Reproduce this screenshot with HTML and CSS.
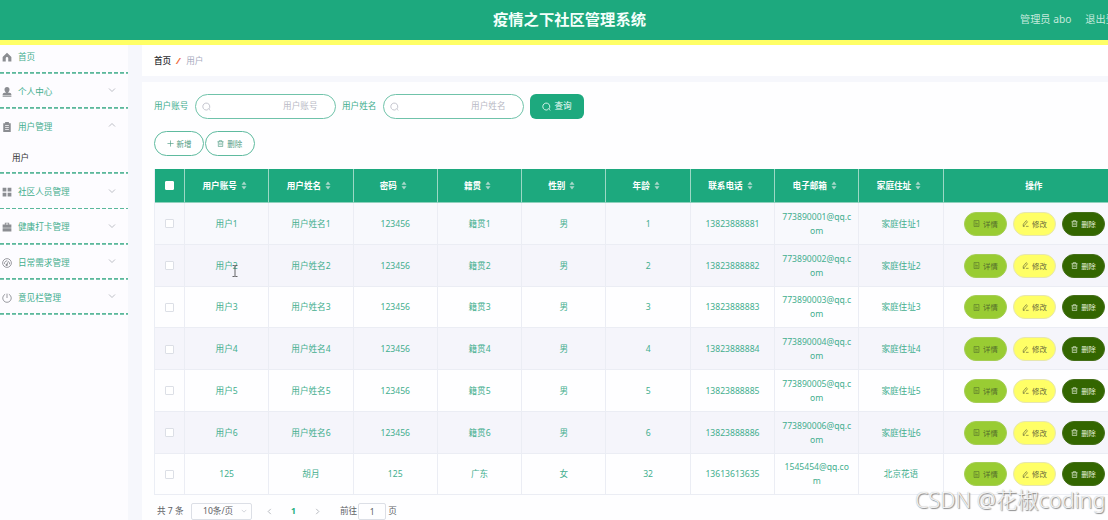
FILE: index.html
```html
<!DOCTYPE html>
<html lang="zh-CN">
<head>
<meta charset="utf-8">
<title>疫情之下社区管理系统</title>
<link rel="stylesheet" href="styles.css">
</head>
<body>
<svg class="sprite" aria-hidden="true">
  <symbol id="home" viewBox="0 0 16 16"><path fill="currentColor" d="M8 1 1 8v7h5v-5a2 2 0 0 1 4 0v5h5V8z"/></symbol>
  <symbol id="person" viewBox="0 0 16 16"><path fill="currentColor" d="M8 0a4 4 0 0 0-4 4c0 2 1 4 2.500 5H4a3 3 0 0 0-3 3v1h14v-1a3 3 0 0 0-3-3H9.500C11 8 12 6 12 4a4 4 0 0 0-4-4zM1 14h14v1.500H1z"/></symbol>
  <symbol id="board" viewBox="0 0 16 16"><path fill="currentColor" fill-rule="evenodd" d="M5 0h6v2h3v14H2V2h3zM5 5v1.300h6V5zm0 3v1.300h6V8zm0 3v1.300h6V11z"/></symbol>
  <symbol id="tiles" viewBox="0 0 16 16"><path fill="currentColor" d="M1 1h6v6H1zM9 1h6v6H9zM1 9h6v6H1zM9 9h6v6H9z"/></symbol>
  <symbol id="case" viewBox="0 0 16 16"><path fill="currentColor" fill-rule="evenodd" d="M4.500 1h7v3H15v5H1V4h3.500zM6 2.500V4h4V2.500zM1 10h14v5H1z"/></symbol>
  <symbol id="gauge" viewBox="0 0 16 16"><g fill="none" stroke="currentColor" stroke-width="1.400"><circle cx="8" cy="8" r="7"/><path d="M4 9.500a4.300 4.300 0 0 1 4.500-5M12 7v3"/><path d="m8 10 2.500-5"/></g><circle cx="7.500" cy="11" r="1.800" fill="currentColor"/></symbol>
  <symbol id="power" viewBox="0 0 16 16"><path fill="none" stroke="currentColor" stroke-width="1.400" d="M8 1v7M5 2a6.800 6.800 0 1 0 6 0"/></symbol>
  <symbol id="down" viewBox="0 0 16 16"><path fill="none" stroke="currentColor" stroke-width="1.800" d="m2 5 6 6 6-6"/></symbol>
  <symbol id="search" viewBox="0 0 16 16"><path fill="none" stroke="currentColor" stroke-width="1.500" d="M12 12.500a6.200 6.200 0 1 0-1.500 1.100M11 11.500l3.500 3.500"/></symbol>
  <symbol id="plus" viewBox="0 0 16 16"><path fill="none" stroke="currentColor" stroke-width="1.500" d="M8 1v14M1 8h14"/></symbol>
  <symbol id="trash" viewBox="0 0 16 16"><path fill="none" stroke="currentColor" stroke-width="1.500" d="M1 4h14M5 4V1.500h6V4M3 4v11h10V4M6.500 7v5M9.500 7v5"/></symbol>
  <symbol id="doc" viewBox="0 0 16 16"><path fill="none" stroke="currentColor" stroke-width="1.400" d="M2.500 1h11v14h-11zM5 4.500h3M5 8h6M5 11.500h6"/></symbol>
  <symbol id="edit" viewBox="0 0 16 16"><path fill="none" stroke="currentColor" stroke-width="1.500" d="M3 9.500 9.500 1.500l3 2.500L6 12l-3.500 1zM2 15h4M9 14.500h6"/></symbol>
  <symbol id="sort" viewBox="0 0 10 16"><path fill="currentColor" d="M5 1 9.500 6.500h-9zM5 15 .5 9.500h9z"/></symbol>
</svg>

<header class="topbar">
  <h1 class="title">疫情之下社区管理系统</h1>
  <div class="account"><span>管理员 abo</span><span>退出登录</span></div>
</header>

<div class="layout">
  <nav class="sidebar">
    <div class="item first"><svg class="mi"><use href="#home"/></svg><span>首页</span></div>
    <div class="item"><svg class="mi"><use href="#person"/></svg><span>个人中心</span><svg class="arrow"><use href="#down"/></svg></div>
    <div class="item open"><svg class="mi"><use href="#board"/></svg><span>用户管理</span><svg class="arrow up"><use href="#down"/></svg></div>
    <div class="subitem">用户</div>
    <div class="item"><svg class="mi"><use href="#tiles"/></svg><span>社区人员管理</span><svg class="arrow"><use href="#down"/></svg></div>
    <div class="item"><svg class="mi"><use href="#case"/></svg><span>健康打卡管理</span><svg class="arrow"><use href="#down"/></svg></div>
    <div class="item"><svg class="mi"><use href="#gauge"/></svg><span>日常需求管理</span><svg class="arrow"><use href="#down"/></svg></div>
    <div class="item"><svg class="mi"><use href="#power"/></svg><span>意见栏管理</span><svg class="arrow"><use href="#down"/></svg></div>
  </nav>

  <main class="content">
    <div class="crumbs"><b>首页</b><i>/</i><span>用户</span></div>
    <section class="panel">
      <div class="filters">
        <span class="label">用户账号</span>
        <div class="field"><svg class="ic9"><use href="#search"/></svg><span>用户账号</span></div>
        <span class="label">用户姓名</span>
        <div class="field"><svg class="ic9"><use href="#search"/></svg><span>用户姓名</span></div>
        <button class="query"><svg class="ic9"><use href="#search"/></svg>查询</button>
      </div>
      <div class="actions">
        <button class="ghost"><svg class="ic"><use href="#plus"/></svg>新增</button>
        <button class="ghost"><svg class="ic"><use href="#trash"/></svg>删除</button>
      </div>

      <div class="table">
        <div class="row head">
          <div><span class="box"></span></div>
          <div>用户账号<svg class="sort"><use href="#sort"/></svg></div>
          <div>用户姓名<svg class="sort"><use href="#sort"/></svg></div>
          <div>密码<svg class="sort"><use href="#sort"/></svg></div>
          <div>籍贯<svg class="sort"><use href="#sort"/></svg></div>
          <div>性别<svg class="sort"><use href="#sort"/></svg></div>
          <div>年龄<svg class="sort"><use href="#sort"/></svg></div>
          <div>联系电话<svg class="sort"><use href="#sort"/></svg></div>
          <div>电子邮箱<svg class="sort"><use href="#sort"/></svg></div>
          <div>家庭住址<svg class="sort"><use href="#sort"/></svg></div>
          <div class="last">操作</div>
        </div>
        <div class="row tint">
          <div><span class="box"></span></div><div>用户1</div><div>用户姓名1</div><div>123456</div><div>籍贯1</div><div>男</div><div>1</div><div>13823888881</div><div class="mail">773890001@qq.com</div><div>家庭住址1</div>
          <div class="ops"><button class="op view"><svg class="ic"><use href="#doc"/></svg>详情</button><button class="op edit"><svg class="ic"><use href="#edit"/></svg>修改</button><button class="op del"><svg class="ic"><use href="#trash"/></svg>删除</button></div>
        </div>
        <div class="row alt">
          <div><span class="box"></span></div><div class="pointed">用户2<svg class="cursor" viewBox="0 0 6 12"><path d="M.5.5h2l.5.500.500-.5h2M3 1v10M.5 11.500h2l.5-.5.5.500h2"/></svg></div><div>用户姓名2</div><div>123456</div><div>籍贯2</div><div>男</div><div>2</div><div>13823888882</div><div class="mail">773890002@qq.com</div><div>家庭住址2</div>
          <div class="ops"><button class="op view"><svg class="ic"><use href="#doc"/></svg>详情</button><button class="op edit"><svg class="ic"><use href="#edit"/></svg>修改</button><button class="op del"><svg class="ic"><use href="#trash"/></svg>删除</button></div>
        </div>
        <div class="row">
          <div><span class="box"></span></div><div>用户3</div><div>用户姓名3</div><div>123456</div><div>籍贯3</div><div>男</div><div>3</div><div>13823888883</div><div class="mail">773890003@qq.com</div><div>家庭住址3</div>
          <div class="ops"><button class="op view"><svg class="ic"><use href="#doc"/></svg>详情</button><button class="op edit"><svg class="ic"><use href="#edit"/></svg>修改</button><button class="op del"><svg class="ic"><use href="#trash"/></svg>删除</button></div>
        </div>
        <div class="row alt">
          <div><span class="box"></span></div><div>用户4</div><div>用户姓名4</div><div>123456</div><div>籍贯4</div><div>男</div><div>4</div><div>13823888884</div><div class="mail">773890004@qq.com</div><div>家庭住址4</div>
          <div class="ops"><button class="op view"><svg class="ic"><use href="#doc"/></svg>详情</button><button class="op edit"><svg class="ic"><use href="#edit"/></svg>修改</button><button class="op del"><svg class="ic"><use href="#trash"/></svg>删除</button></div>
        </div>
        <div class="row">
          <div><span class="box"></span></div><div>用户5</div><div>用户姓名5</div><div>123456</div><div>籍贯5</div><div>男</div><div>5</div><div>13823888885</div><div class="mail">773890005@qq.com</div><div>家庭住址5</div>
          <div class="ops"><button class="op view"><svg class="ic"><use href="#doc"/></svg>详情</button><button class="op edit"><svg class="ic"><use href="#edit"/></svg>修改</button><button class="op del"><svg class="ic"><use href="#trash"/></svg>删除</button></div>
        </div>
        <div class="row alt">
          <div><span class="box"></span></div><div>用户6</div><div>用户姓名6</div><div>123456</div><div>籍贯6</div><div>男</div><div>6</div><div>13823888886</div><div class="mail">773890006@qq.com</div><div>家庭住址6</div>
          <div class="ops"><button class="op view"><svg class="ic"><use href="#doc"/></svg>详情</button><button class="op edit"><svg class="ic"><use href="#edit"/></svg>修改</button><button class="op del"><svg class="ic"><use href="#trash"/></svg>删除</button></div>
        </div>
        <div class="row">
          <div><span class="box"></span></div><div>125</div><div>胡月</div><div>125</div><div>广东</div><div>女</div><div>32</div><div>13613613635</div><div class="mail">1545454@qq.com</div><div>北京花语</div>
          <div class="ops"><button class="op view"><svg class="ic"><use href="#doc"/></svg>详情</button><button class="op edit"><svg class="ic"><use href="#edit"/></svg>修改</button><button class="op del"><svg class="ic"><use href="#trash"/></svg>删除</button></div>
        </div>
      </div>

      <div class="pager">
        <span class="total">共 7 条</span>
        <div class="size"><span>10条/页</span><svg class="ic"><use href="#down"/></svg></div>
        <svg class="ic prev"><use href="#down"/></svg>
        <b class="page">1</b>
        <svg class="ic next"><use href="#down"/></svg>
        <span>前往</span><div class="jump">1</div><span>页</span>
      </div>
    </section>
  </main>
</div>
<div class="watermark">CSDN @花椒coding</div>
</body>
</html>
```

FILE: styles.css
```css
* { box-sizing: border-box; }
body {
  margin: 0;
  width: 1108px;
  height: 520px;
  overflow: hidden;
  position: relative;
  background: #f6f7fc;
  color: #43ae8e;
  font: 8.6px/14px "Noto Sans", "Noto Sans CJK SC", sans-serif;
}
button { font: inherit; padding: 0; margin: 0; }
.sprite { display: none; }
svg { flex: none; }
.ic { width: 7px; height: 7px; }
.ic9 { width: 9px; height: 9px; }

.topbar {
  height: 45px;
  background: #1da97e;
  border-bottom: 5px solid #ffff66;
  display: grid;
  grid-template-columns: 493px 1fr auto;
  align-items: center;
  padding-bottom: 3px;
}
.title {
  grid-column: 2;
  margin: 0;
  font-size: 15.300px;
  line-height: 20px;
  font-weight: 700;
  color: #f4fffb;
}
.account {
  display: flex;
  gap: 14px;
  width: 88px;
  white-space: nowrap;
  font-size: 10.200px;
  color: #c5e9dd;
}
.account span { flex: none; }

.layout { display: flex; height: 475px; }
.sidebar { width: 128px; flex: none; background: #fdfcff; margin-right: 14px; }
.item, .subitem {
  background: repeating-linear-gradient(90deg, #5bb89b 0 4px, transparent 4px 6px) left bottom / 100% 1.800px no-repeat;
}
.item {
  height: 35.150px;
  display: flex;
  align-items: center;
  padding: 1px 12px 0 2px;
}
.item.first { height: 28.500px; padding-bottom: 5px; }
.item.open { background: none; }
.item span { margin-left: 6px; flex: 1; }
.mi { width: 10px; height: 10px; color: #8b8d92; }
.arrow { width: 8px; height: 8px; color: #b4b7bd; margin-top: -3px; }
.up { transform: rotate(180deg); }
.subitem {
  height: 30.500px;
  padding: 7px 0 0 12px;
  color: #333;
}

.content { flex: 1; min-width: 0; display: flex; flex-direction: column; gap: 6px; }
.crumbs {
  height: 31px;
  flex: none;
  background: #fff;
  display: flex;
  align-items: center;
  padding-left: 12px;
}
.crumbs b { color: #303133; font-weight: 500; }
.crumbs i { color: #ef6a3c; font-weight: 700; font-size: 9.500px; margin: 0 6px 0 5px; }
.crumbs span { color: #a9acc0; }
.panel { flex: 1; background: #fefeff; padding: 12px 0 0 12px; overflow: hidden; }

.filters { display: flex; align-items: center; height: 24.500px; }
.label { width: 34.500px; margin-right: 6.500px; white-space: nowrap; }
.field {
  width: 140.500px;
  height: 24.500px;
  border: 1px solid #70c3aa;
  border-radius: 13px;
  display: flex;
  align-items: center;
  justify-content: space-between;
  padding: 0 17px 0 6px;
  margin-right: 6.500px;
  background: #fff;
  color: #b9bac5;
}
.query {
  width: 54px;
  height: 24.500px;
  border: 0;
  border-radius: 6px;
  background: #1da97e;
  color: #f3fffb;
  display: flex;
  align-items: center;
  justify-content: center;
  gap: 3px;
}
.actions { display: flex; gap: .4px; margin-top: 12.800px; }
.ghost {
  width: 50.200px;
  height: 25px;
  border: 1px solid #5fbb9f;
  border-radius: 13px;
  background: #fff;
  color: #4f9c84;
  font-size: 7.500px;
  display: flex;
  align-items: center;
  justify-content: center;
  gap: 3px;
}

.table { width: 971px; margin-top: 13.200px; border-left: 1px solid #ebeef5; }
.row {
  display: grid;
  grid-template-columns: 30px repeat(9, 84.300px) 1fr;
  height: 41.780px;
  background: #fefeff;
}
.row > div {
  display: flex;
  align-items: center;
  justify-content: center;
  text-align: center;
  border-right: 1px solid #ebedf4;
  border-bottom: 1px solid #ebedf4;
  padding-top: 1px;
}
.row.tint { background: #f8f9fd; }
.row.alt { background: #f5f5fb; }
.row.head { height: 33.500px; background: #1da97e; color: #fff; font-weight: 700; }
.row.head > div { border-right-color: #9cd8c5; border-bottom-color: #8fd1bd; padding: 0 4px 0 0; }
.row.head > div:first-child, .row.head > .last { padding: 0; }
.box { width: 9px; height: 9px; border: 1px solid #dcdfe6; border-radius: 1px; background: #fff; margin-right: 1px; }
.head .box { border-color: #fff; margin: 0; }
.sort { width: 6px; height: 9px; margin-left: 4px; color: #a9d8ca; }
.row > .mail { display: block; padding: 6.800px 6px 0; word-break: break-all; }
.pointed { position: relative; }
.cursor {
  position: absolute;
  left: 47px;
  top: 20px;
  width: 6px;
  height: 12px;
  fill: none;
  stroke: #555;
  stroke-width: .9;
}
.row > .ops { gap: 5.600px; justify-content: flex-start; padding-left: 20px; }
.op {
  width: 43.500px;
  height: 24px;
  border: 1px solid #dcdfe6;
  border-radius: 12px;
  font-size: 7.400px;
  display: flex;
  align-items: center;
  justify-content: center;
  gap: 3px;
}
.view { background: #99cc33; border-color: #a5cd55; color: #55702c; }
.edit { background: #ffff66; border-color: #e6e6b0; color: #66683c; }
.del { background: #336600; border-color: #456f1a; color: #e7f0dd; }

.pager { display: flex; align-items: center; height: 17px; margin-top: 7.500px; padding-left: 3px; color: #606266; white-space: nowrap; }
.total { width: 34px; }
.size {
  width: 61px;
  height: 17px;
  border: 1px solid #dcdfe6;
  border-radius: 2px;
  display: flex;
  align-items: center;
  justify-content: space-between;
  padding: 0 4px 0 11px;
}
.size .ic { color: #c0c4cc; width: 6px; height: 6px; }
.prev { transform: rotate(90deg); margin-left: 14px; color: #a5a8b0; }
.next { transform: rotate(-90deg); margin: 0 19px 0 18px; color: #a5a8b0; }
.page { color: #1dae80; margin-left: 18px; }
.jump { width: 28px; height: 17px; border: 1px solid #dcdfe6; border-radius: 2px; text-align: center; line-height: 16px; margin: 0 2px 0 1px; }

.watermark {
  position: absolute;
  left: 915px;
  top: 486px;
  font: 300 21.500px/28px "Noto Sans", "Noto Sans CJK SC", sans-serif;
  white-space: nowrap;
  color: rgba(255, 255, 255, .85);
  text-shadow: 1px 1px 1px #888, 0 0 1px #aaa;
}
```
